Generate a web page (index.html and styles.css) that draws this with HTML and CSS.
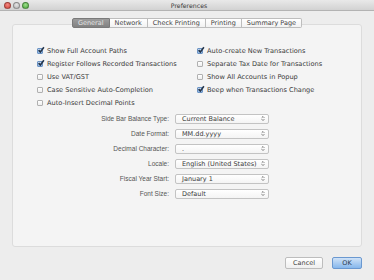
FILE: index.html
```html
<!DOCTYPE html>
<html lang="en">
<head>
  <meta charset="UTF-8">
  <meta name="viewport" content="width=device-width, initial-scale=1.0">
  <title>Preferences</title>
  <link rel="stylesheet" href="styles.css">
</head>
<body>

<div class="window">
  <div class="titlebar">
    <div class="lights">
      <span class="light close"></span>
      <span class="light minimize"></span>
      <span class="light zoom"></span>
    </div>
    <div class="title">Preferences</div>
  </div>

  <div class="content">
    <div class="tabs">
      <div class="tab active">General</div>
      <div class="tab">Network</div>
      <div class="tab">Check Printing</div>
      <div class="tab">Printing</div>
      <div class="tab">Summary Page</div>
    </div>

    <div class="panel">
      <div class="checks">
        <div class="check-col left">
          <label class="check"><span class="box on"><svg viewBox="0 0 10 10"><path d="M2 5.2 L4.2 7.6 L8.6 1.6" /></svg></span>Show Full Account Paths</label>
          <label class="check"><span class="box on"><svg viewBox="0 0 10 10"><path d="M2 5.2 L4.2 7.6 L8.6 1.6" /></svg></span>Register Follows Recorded Transactions</label>
          <label class="check"><span class="box"></span>Use VAT/GST</label>
          <label class="check"><span class="box"></span>Case Sensitive Auto-Completion</label>
          <label class="check"><span class="box"></span>Auto-Insert Decimal Points</label>
        </div>
        <div class="check-col">
          <label class="check"><span class="box on"><svg viewBox="0 0 10 10"><path d="M2 5.2 L4.2 7.6 L8.6 1.6" /></svg></span>Auto-create New Transactions</label>
          <label class="check"><span class="box"></span>Separate Tax Date for Transactions</label>
          <label class="check"><span class="box"></span>Show All Accounts in Popup</label>
          <label class="check"><span class="box on"><svg viewBox="0 0 10 10"><path d="M2 5.2 L4.2 7.6 L8.6 1.6" /></svg></span>Beep when Transactions Change</label>
        </div>
      </div>

      <div class="form">
        <div class="field-label">Side Bar Balance Type:</div>
        <div class="popup">Current Balance<svg class="arrows" viewBox="0 0 6 10"><path d="M1 4 L3 2 L5 4 M1 6 L3 8 L5 6" /></svg></div>

        <div class="field-label">Date Format:</div>
        <div class="popup">MM.dd.yyyy<svg class="arrows" viewBox="0 0 6 10"><path d="M1 4 L3 2 L5 4 M1 6 L3 8 L5 6" /></svg></div>

        <div class="field-label">Decimal Character:</div>
        <div class="popup">.<svg class="arrows" viewBox="0 0 6 10"><path d="M1 4 L3 2 L5 4 M1 6 L3 8 L5 6" /></svg></div>

        <div class="field-label">Locale:</div>
        <div class="popup">English (United States)<svg class="arrows" viewBox="0 0 6 10"><path d="M1 4 L3 2 L5 4 M1 6 L3 8 L5 6" /></svg></div>

        <div class="field-label">Fiscal Year Start:</div>
        <div class="popup">January 1<svg class="arrows" viewBox="0 0 6 10"><path d="M1 4 L3 2 L5 4 M1 6 L3 8 L5 6" /></svg></div>

        <div class="field-label">Font Size:</div>
        <div class="popup">Default<svg class="arrows" viewBox="0 0 6 10"><path d="M1 4 L3 2 L5 4 M1 6 L3 8 L5 6" /></svg></div>
      </div>
    </div>

    <div class="footer">
      <button class="btn">Cancel</button>
      <button class="btn default">OK</button>
    </div>
  </div>
</div>

</body>
</html>
```

FILE: styles.css
```css
body {
  margin: 0;
  padding: 0;
  background-color: #ffffff;
  font-family: "DejaVu Sans", sans-serif;
  color: #3a3a3a;
}

.window {
  width: 374px;
  height: 280px;
  background-color: #ededed;
  overflow: hidden;
}

/* title bar */
.titlebar {
  height: 11px;
  display: flex;
  align-items: center;
  background: linear-gradient(#e9e9e9, #d2d2d2);
  border-bottom: 1px solid #b3b3b3;
  box-sizing: border-box;
}

.lights {
  display: flex;
  gap: 2px;
  padding-left: 4px;
  width: 60px;
}

.light {
  width: 5px;
  height: 5px;
  border-radius: 50%;
  border: 0.5px solid rgba(0, 0, 0, 0.3);
}

.close { background: radial-gradient(circle at 50% 35%, #f28a84, #d4443a); }
.minimize { background: radial-gradient(circle at 50% 35%, #e6e6e6, #b4b4b4); }
.zoom { background: radial-gradient(circle at 50% 35%, #9ee08c, #4aa83c); }

.title {
  flex: 1;
  text-align: center;
  margin-right: 60px;
  font-size: 6.2px;
  color: #3a3a3a;
}

/* tabs */
.content {
  padding-top: 7px;
}

.tabs {
  position: relative;
  z-index: 1;
  display: flex;
  justify-content: center;
  margin-bottom: -4px;
}

.tab {
  height: 10px;
  box-sizing: border-box;
  padding: 0 5px;
  font-size: 6.5px;
  line-height: 9px;
  color: #444444;
  background: linear-gradient(#ffffff, #f2f2f2);
  border: 1px solid #bdbdbd;
  border-left: none;
}

.tab:first-child {
  border-left: 1px solid #8a8a8a;
  border-radius: 2px 0 0 2px;
}

.tab:last-child {
  border-radius: 0 2px 2px 0;
}

.tab.active {
  background: linear-gradient(#9c9c9c, #828282);
  border-color: #7a7a7a;
  color: #e4e4e4;
}

/* panel */
.panel {
  margin: 0 12px;
  height: 223px;
  box-sizing: border-box;
  padding-top: 19px;
  background-color: #f4f4f4;
  border: 1px solid #dcdcdc;
  border-radius: 3px;
}

.checks {
  display: flex;
  padding-left: 24px;
}

.check-col {
  display: flex;
  flex-direction: column;
}

.check-col.left {
  width: 160px;
}

.check {
  display: flex;
  align-items: center;
  gap: 4px;
  height: 13px;
  font-size: 6.6px;
  color: #3a3a3a;
  white-space: nowrap;
}

.box {
  width: 6px;
  height: 6px;
  box-sizing: border-box;
  border: 1px solid #b0b0b0;
  border-radius: 1px;
  background: linear-gradient(#ffffff, #eeeeee);
  display: flex;
}

.box.on {
  border-color: #6b93c4;
  background: linear-gradient(#cfe1f6, #8fb7e6);
}

.box svg {
  width: 8px;
  height: 8px;
  margin: -3px 0 0 -1px;
  overflow: visible;
}

.box svg path {
  fill: none;
  stroke: #23344a;
  stroke-width: 2;
}

/* popup fields */
.form {
  display: grid;
  grid-template-columns: 156px 94px;
  column-gap: 6px;
  grid-auto-rows: 15px;
  align-items: center;
  margin-top: 2px;
}

.field-label {
  text-align: right;
  font-family: "Liberation Sans", Arial, sans-serif;
  font-size: 6.5px;
  color: #555555;
}

.popup {
  height: 10px;
  box-sizing: border-box;
  display: flex;
  align-items: center;
  justify-content: space-between;
  padding: 0 3px 0 6px;
  font-size: 6.5px;
  color: #3a3a3a;
  background: linear-gradient(#ffffff, #f4f4f4);
  border: 1px solid #c3c3c3;
  border-radius: 2px;
}

.arrows {
  width: 4px;
  height: 7px;
}

.arrows path {
  fill: none;
  stroke: #555555;
  stroke-width: 1.2;
}

/* buttons */
.footer {
  display: flex;
  justify-content: flex-end;
  gap: 9px;
  padding: 10px 12px 0 0;
}

.btn {
  height: 12px;
  padding: 0;
  font-family: "DejaVu Sans", sans-serif;
  font-size: 6.5px;
  color: #444444;
  background: linear-gradient(#ffffff, #efefef);
  border: 1px solid #bdbdbd;
  border-radius: 2px;
  width: 38px;
}

.btn.default {
  width: 30px;
  background: linear-gradient(#cfe2f7, #86b7ec);
  border-color: #6a98d0;
  color: #2a3a50;
}
```
